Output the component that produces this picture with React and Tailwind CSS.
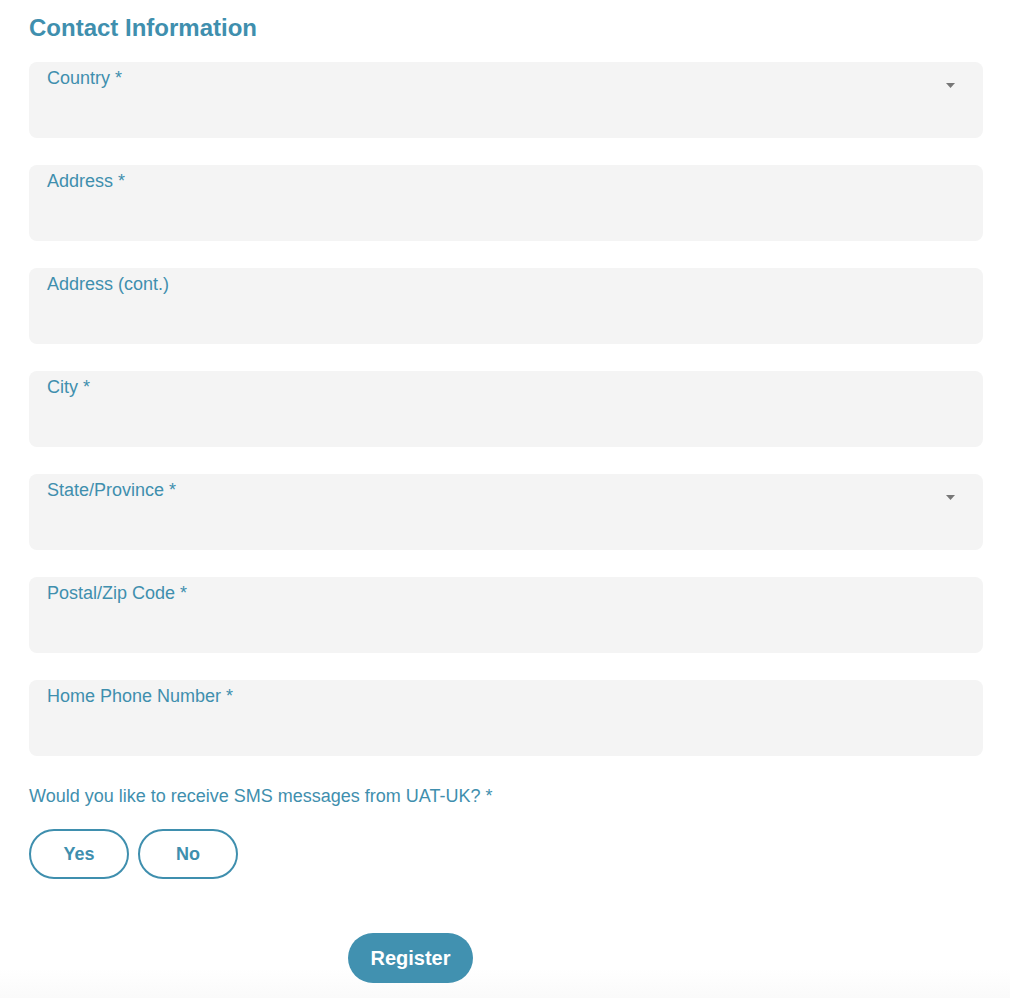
import React, { useState } from 'react';

const fields = [
  { label: 'Country *', select: true },
  { label: 'Address *' },
  { label: 'Address (cont.)' },
  { label: 'City *' },
  { label: 'State/Province *', select: true },
  { label: 'Postal/Zip Code *' },
  { label: 'Home Phone Number *' },
];

function Field({ label, select }) {
  return (
    <div className="relative h-[76px] w-full rounded-lg bg-[#f4f4f4] px-[18px] pt-[1px]">
      <div className="text-[18px] leading-[30px] text-[#3f8fae]">{label}</div>
      {select && (
        <svg className="absolute right-[28px] top-[21px]" width="9" height="5" viewBox="0 0 9 5">
          <path d="M0 0h9L4.5 5z" fill="#777" />
        </svg>
      )}
    </div>
  );
}

export default function App() {
  const [sms, setSms] = useState(null);

  return (
    <div className="min-h-[998px] bg-gradient-to-b from-white from-[97%] to-[#fafafa] px-[29px] pt-[13px] font-['Liberation_Sans',Arial,sans-serif]">
      <div className="w-[954px]">
        <h2 className="text-[24px] font-bold leading-[30px] text-[#3f8fae]">Contact Information</h2>
        <div className="mt-[19px] flex flex-col gap-[27px]">
          {fields.map((f) => (
            <Field key={f.label} {...f} />
          ))}
        </div>
        <p className="mt-[29px] text-[18px] leading-[22px] text-[#3f8fae]">
          Would you like to receive SMS messages from UAT-UK? *
        </p>
        <div className="mt-[22px] flex gap-[9px]">
          {['Yes', 'No'].map((opt) => (
            <button
              key={opt}
              type="button"
              onClick={() => setSms(opt)}
              className={
                sms === opt
                  ? 'h-[50px] w-[100px] rounded-full border-2 border-[#3f8fae] bg-[#3f8fae] text-[18px] font-bold text-white'
                  : 'h-[50px] w-[100px] rounded-full border-2 border-[#3f8fae] bg-white text-[18px] font-bold text-[#3f8fae]'
              }
            >
              {opt}
            </button>
          ))}
        </div>
        <div className="mt-[54px] pl-[319px]">
          <button
            type="button"
            className="h-[50px] w-[125px] rounded-full bg-[#4191b0] text-[20px] font-bold text-white"
          >
            Register
          </button>
        </div>
      </div>
    </div>
  );
}
